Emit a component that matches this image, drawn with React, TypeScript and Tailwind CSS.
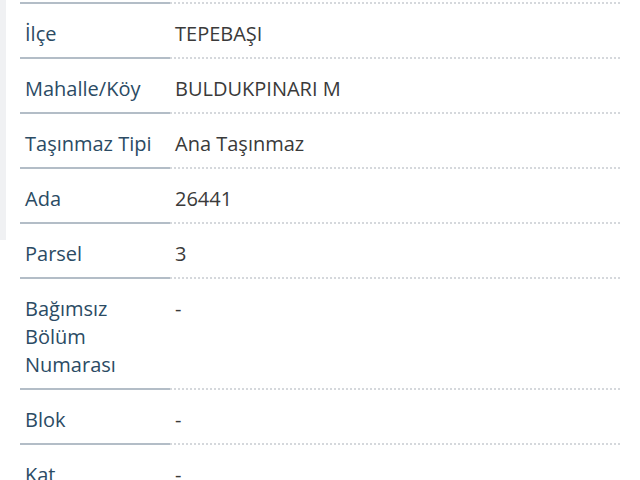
const rows: { label: string[]; value: string }[] = [
  { label: ["İlçe"], value: "TEPEBAŞI" },
  { label: ["Mahalle/Köy"], value: "BULDUKPINARI M" },
  { label: ["Taşınmaz Tipi"], value: "Ana Taşınmaz" },
  { label: ["Ada"], value: "26441" },
  { label: ["Parsel"], value: "3" },
  { label: ["Bağımsız", "Bölüm", "Numarası"], value: "-" },
  { label: ["Blok"], value: "-" },
  { label: ["Kat"], value: "-" },
];

function Divider() {
  return (
    <div className="flex items-center h-[2px]">
      <div className="w-[150px] h-[2px] bg-[#b3bdc7]" />
      <div className="flex-1 border-t-2 border-dotted border-[#d5d8dc]" />
    </div>
  );
}

export default function App() {
  return (
    <div className="relative w-[640px] h-[480px] overflow-hidden bg-white flex font-['Open_Sans',sans-serif]">
      <div className="w-[6px] shrink-0">
        <div className="h-[240px] bg-[#f0f1f3]" />
      </div>
      <div className="w-[600px] ml-[14px] pt-[2px]">
        {rows.map((r) => (
          <div key={r.label.join(" ")}>
            <Divider />
            <div className="flex pt-[16px] pb-[9px] text-[20px] leading-[28px]">
              <div className="w-[155px] pl-[5px] text-[#2b4b64]">
                {r.label.map((l) => (
                  <div key={l}>{l}</div>
                ))}
              </div>
              <div className="text-[#3a3a3a]">{r.value}</div>
            </div>
          </div>
        ))}
      </div>
    </div>
  );
}
